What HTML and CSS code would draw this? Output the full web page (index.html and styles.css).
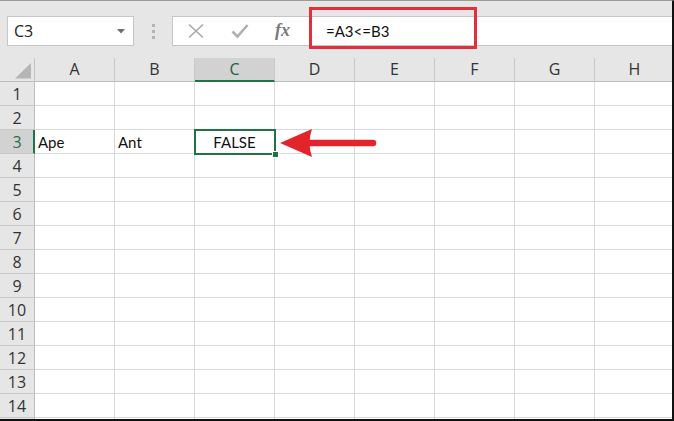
FILE: index.html
```html
<!DOCTYPE html>
<html>
<head>
<meta charset="utf-8">
<link rel="stylesheet" href="styles.css">
</head>
<body>
<div class="window">
  <div class="toolbar">
    <div class="namebox">
      <span class="name">C3</span>
      <svg class="caret" width="8" height="5" viewBox="0 0 8 5"><path d="M0 0H8L4 4.5Z" fill="#6d6d6d"/></svg>
    </div>
    <div class="grip"><i></i><i></i><i></i></div>
    <div class="formula">
      <div class="fbtns">
        <svg class="ficon" width="18" height="16" viewBox="0 0 18 16"><path d="M2 1.5L16 14.5M16 1.5L2 14.5" stroke="#a9a9a9" stroke-width="1.6" fill="none"/></svg>
        <svg class="ficon" width="18" height="16" viewBox="0 0 18 16"><path d="M1.5 8.5L6.5 13.5L16.5 2" stroke="#b0b0b0" stroke-width="2.6" fill="none"/></svg>
        <span class="fx">fx</span>
      </div>
      <div class="ftext">=A3&lt;=B3</div>
    </div>
    <div class="redbox"></div>
  </div>
  <div class="sheet">
    <div class="corner"><svg width="35" height="24" viewBox="0 0 35 24"><path d="M15 20.5H31V5Z" fill="#b5b5b5"/></svg></div>
    <div class="ch">A</div><div class="ch">B</div><div class="ch sel">C</div><div class="ch">D</div><div class="ch">E</div><div class="ch">F</div><div class="ch">G</div><div class="ch">H</div>

    <div class="rh">1</div><div class="c"></div><div class="c"></div><div class="c"></div><div class="c"></div><div class="c"></div><div class="c"></div><div class="c"></div><div class="c"></div>
    <div class="rh">2</div><div class="c"></div><div class="c"></div><div class="c"></div><div class="c"></div><div class="c"></div><div class="c"></div><div class="c"></div><div class="c"></div>
    <div class="rh sel">3</div><div class="c">Ape</div><div class="c">Ant</div><div class="c active">FALSE<span class="handle"></span></div><div class="c"></div><div class="c"></div><div class="c"></div><div class="c"></div><div class="c"></div>
    <div class="rh">4</div><div class="c"></div><div class="c"></div><div class="c"></div><div class="c"></div><div class="c"></div><div class="c"></div><div class="c"></div><div class="c"></div>
    <div class="rh">5</div><div class="c"></div><div class="c"></div><div class="c"></div><div class="c"></div><div class="c"></div><div class="c"></div><div class="c"></div><div class="c"></div>
    <div class="rh">6</div><div class="c"></div><div class="c"></div><div class="c"></div><div class="c"></div><div class="c"></div><div class="c"></div><div class="c"></div><div class="c"></div>
    <div class="rh">7</div><div class="c"></div><div class="c"></div><div class="c"></div><div class="c"></div><div class="c"></div><div class="c"></div><div class="c"></div><div class="c"></div>
    <div class="rh">8</div><div class="c"></div><div class="c"></div><div class="c"></div><div class="c"></div><div class="c"></div><div class="c"></div><div class="c"></div><div class="c"></div>
    <div class="rh">9</div><div class="c"></div><div class="c"></div><div class="c"></div><div class="c"></div><div class="c"></div><div class="c"></div><div class="c"></div><div class="c"></div>
    <div class="rh">10</div><div class="c"></div><div class="c"></div><div class="c"></div><div class="c"></div><div class="c"></div><div class="c"></div><div class="c"></div><div class="c"></div>
    <div class="rh">11</div><div class="c"></div><div class="c"></div><div class="c"></div><div class="c"></div><div class="c"></div><div class="c"></div><div class="c"></div><div class="c"></div>
    <div class="rh">12</div><div class="c"></div><div class="c"></div><div class="c"></div><div class="c"></div><div class="c"></div><div class="c"></div><div class="c"></div><div class="c"></div>
    <div class="rh">13</div><div class="c"></div><div class="c"></div><div class="c"></div><div class="c"></div><div class="c"></div><div class="c"></div><div class="c"></div><div class="c"></div>
    <div class="rh">14</div><div class="c"></div><div class="c"></div><div class="c"></div><div class="c"></div><div class="c"></div><div class="c"></div><div class="c"></div><div class="c"></div>
    <div class="rh"></div><div class="c"></div><div class="c"></div><div class="c"></div><div class="c"></div><div class="c"></div><div class="c"></div><div class="c"></div><div class="c"></div>
  </div>
  <svg class="arrow" width="110" height="40" viewBox="0 0 110 40">
    <path d="M0 20 L32 6 Q27 20 32 34 Z" fill="#e3242b"/>
    <path d="M30 20 H93" stroke="#e3242b" stroke-width="6.5" stroke-linecap="round"/>
  </svg>
</div>
</body>
</html>
```
FILE: styles.css
```css
html, body {
  margin: 0;
  padding: 0;
  background: #fff;
}
.window {
  position: relative;
  width: 674px;
  height: 421px;
  box-sizing: border-box;
  border-top: 1px solid #9a9a9a;
  border-right: 2px solid #111;
  border-bottom: 2px solid #111;
  overflow: hidden;
  font-family: "Open Sans", "Noto Sans", sans-serif;
}
.toolbar {
  position: relative;
  height: 57px;
  background: #e6e6e6;
  display: flex;
  align-items: flex-start;
  padding: 15px 0 0 7px;
  box-sizing: border-box;
}
.namebox {
  width: 127px;
  height: 30px;
  box-sizing: border-box;
  background: #fff;
  border: 1px solid #c6c6c6;
  display: flex;
  align-items: center;
  justify-content: space-between;
  padding: 0 8px 0 6px;
}
.name {
  font-size: 16px;
  color: #222;
  line-height: 1;
}
.caret { display: block; }
.grip {
  width: 38px;
  height: 30px;
  display: flex;
  flex-direction: column;
  align-items: center;
  justify-content: center;
  gap: 3px;
}
.grip i {
  display: block;
  width: 3px;
  height: 3px;
  background: #b4b4b4;
}
.formula {
  flex: 1;
  height: 30px;
  box-sizing: border-box;
  background: #fff;
  border: 1px solid #c6c6c6;
  border-right: none;
  display: flex;
  align-items: center;
}
.fbtns {
  width: 136px;
  height: 100%;
  display: flex;
  align-items: center;
  padding-left: 14px;
  box-sizing: border-box;
}
.ficon { display: block; margin-right: 26px; }
.fx {
  font-family: "Liberation Serif", "DejaVu Serif", serif;
  font-style: italic;
  font-weight: bold;
  font-size: 18px;
  color: #7a7a7a;
  line-height: 1;
  margin-top: -2px;
}
.ftext {
  padding-left: 17px;
  font-family: Lato, "Open Sans", sans-serif;
  font-size: 15px;
  color: #111;
  line-height: 1;
  margin-top: 1px;
}
.redbox {
  position: absolute;
  left: 309px;
  top: 6px;
  width: 168px;
  height: 42px;
  box-sizing: border-box;
  border: 3px solid #e0303a;
}
.sheet {
  display: grid;
  grid-template-columns: 35px repeat(8, 80px);
  grid-auto-rows: 24px;
  width: 675px;
}
.sheet > div {
  box-sizing: border-box;
  border-right: 1px solid #d8d8d8;
  border-bottom: 1px solid #d8d8d8;
}
.sheet > .corner {
  background: #e6e6e6;
  border-right: 1px solid #c4c4c4;
  border-bottom: 1px solid #bdbdbd;
}
.corner svg { display: block; }
.sheet > .ch {
  background: #e6e6e6;
  border-right: 1px solid #c8c8c8;
  border-bottom: 1px solid #bdbdbd;
  font-size: 16px;
  color: #333;
  text-align: center;
  line-height: 23px;
}
.sheet > .ch.sel {
  background: #d2d2d2;
  color: #1d5e3a;
  border-bottom: 2px solid #217346;
  line-height: 22px;
}
.sheet > .rh {
  background: #e6e6e6;
  border-right: 1px solid #bdbdbd;
  border-bottom: 1px solid #c8c8c8;
  font-size: 16px;
  color: #333;
  text-align: center;
  line-height: 24px;
}
.sheet > .rh.sel {
  background: #d2d2d2;
  color: #217346;
  border-right: 2px solid #217346;
  padding-left: 1px;
}
.c {
  font-family: Lato, "Open Sans", sans-serif;
  font-size: 15px;
  color: #111;
  line-height: 23px;
  padding: 1px 0 0 3px;
  white-space: nowrap;
}
.c.active {
  position: relative;
  text-align: center;
  padding-left: 0;
}
.c.active::after {
  content: "";
  position: absolute;
  left: -1px;
  top: -1px;
  right: -2px;
  bottom: -2px;
  border: 2px solid #217346;
  pointer-events: none;
}
.handle {
  position: absolute;
  right: -5px;
  bottom: -5px;
  width: 7px;
  height: 7px;
  box-sizing: border-box;
  background: #217346;
  border: 1px solid #fff;
  z-index: 2;
}
.arrow {
  position: absolute;
  left: 280px;
  top: 122px;
}
```
